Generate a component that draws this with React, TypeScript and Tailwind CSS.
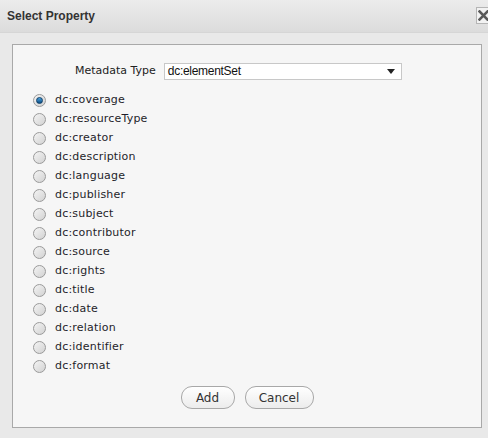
import React, { useState } from "react";

const props = [
  "dc:coverage",
  "dc:resourceType",
  "dc:creator",
  "dc:description",
  "dc:language",
  "dc:publisher",
  "dc:subject",
  "dc:contributor",
  "dc:source",
  "dc:rights",
  "dc:title",
  "dc:date",
  "dc:relation",
  "dc:identifier",
  "dc:format",
];

const Radio: React.FC<{ checked: boolean }> = ({ checked }) => (
  <span className="w-[13px] h-[13px] rounded-full border border-[#9a9a9a] bg-gradient-to-br from-[#f4f4f4] to-[#d2d2d2] flex items-center justify-center shrink-0">
    {checked && (
      <span className="w-[7px] h-[7px] rounded-full bg-gradient-to-b from-[#4aa3df] to-[#0b4f86] border border-[#0d3d66]" />
    )}
  </span>
);

export default function App() {
  const [sel, setSel] = useState(0);
  return (
    <div
      className="w-[488px] h-[438px] bg-[#e9e9e9] overflow-hidden text-[#1e1e2a]"
      style={{ fontFamily: '"DejaVu Sans", sans-serif' }}
    >
      {/* header */}
      <div className="h-[33px] bg-gradient-to-b from-[#ececec] to-[#dcdcdc] border-b border-[#d6d6d6] flex items-center justify-between pl-[7px]">
        <span
          className="text-[12px] font-bold text-[#333]"
          style={{ fontFamily: '"Liberation Sans", Arial, sans-serif' }}
        >
          Select Property
        </span>
        <span className="w-[15px] h-[17px] border border-[#b5b5b5] bg-[#f2f2f2] flex items-center justify-center mr-[-3px] mt-[-1px]">
          <svg width="11" height="11" viewBox="0 0 11 11">
            <path d="M1.5 1.5 L9.5 9.5 M9.5 1.5 L1.5 9.5" stroke="#5a5a5a" strokeWidth="2.6" strokeLinecap="square" />
          </svg>
        </span>
      </div>

      {/* panel */}
      <div className="mt-[11px] ml-[12px] w-[470px] h-[384px] border border-[#a9a9a9] bg-[#f6f6f6] flex flex-col">
        <div className="flex items-center mt-[18px] h-[16px]">
          <span className="ml-[62px] text-[11px] text-[#222]">Metadata Type</span>
          <div className="ml-[8px] w-[238px] h-[17px] border border-[#c8c8c8] bg-white flex items-center justify-between pl-[3px] pr-[6px]">
            <span
              className="text-[12px] text-[#111] tracking-[-0.3px]"
              style={{ fontFamily: '"Liberation Sans", Arial, sans-serif' }}
            >
              dc:elementSet
            </span>
            <svg width="8" height="5" viewBox="0 0 8 5">
              <path d="M0 0 H8 L4 5 Z" fill="#222" />
            </svg>
          </div>
        </div>

        <div className="flex flex-col mt-[12px] pl-[20px]">
          {props.map((p, i) => (
            <label
              key={p}
              className="flex items-center h-[19px] gap-[9px] cursor-pointer"
              onClick={() => setSel(i)}
            >
              <Radio checked={sel === i} />
              <span className="text-[11px] tracking-[0.2px] text-[#1e1e2a]">{p}</span>
            </label>
          ))}
        </div>

        <div className="flex justify-center gap-[10px] mt-[10px]">
          <button className="w-[54px] h-[23px] rounded-[11px] border border-[#a8a8a8] bg-gradient-to-b from-white to-[#ececec] text-[12px] text-[#333]">
            Add
          </button>
          <button className="w-[69px] h-[23px] rounded-[11px] border border-[#a8a8a8] bg-gradient-to-b from-white to-[#ececec] text-[12px] text-[#333]">
            Cancel
          </button>
        </div>
      </div>
    </div>
  );
}
